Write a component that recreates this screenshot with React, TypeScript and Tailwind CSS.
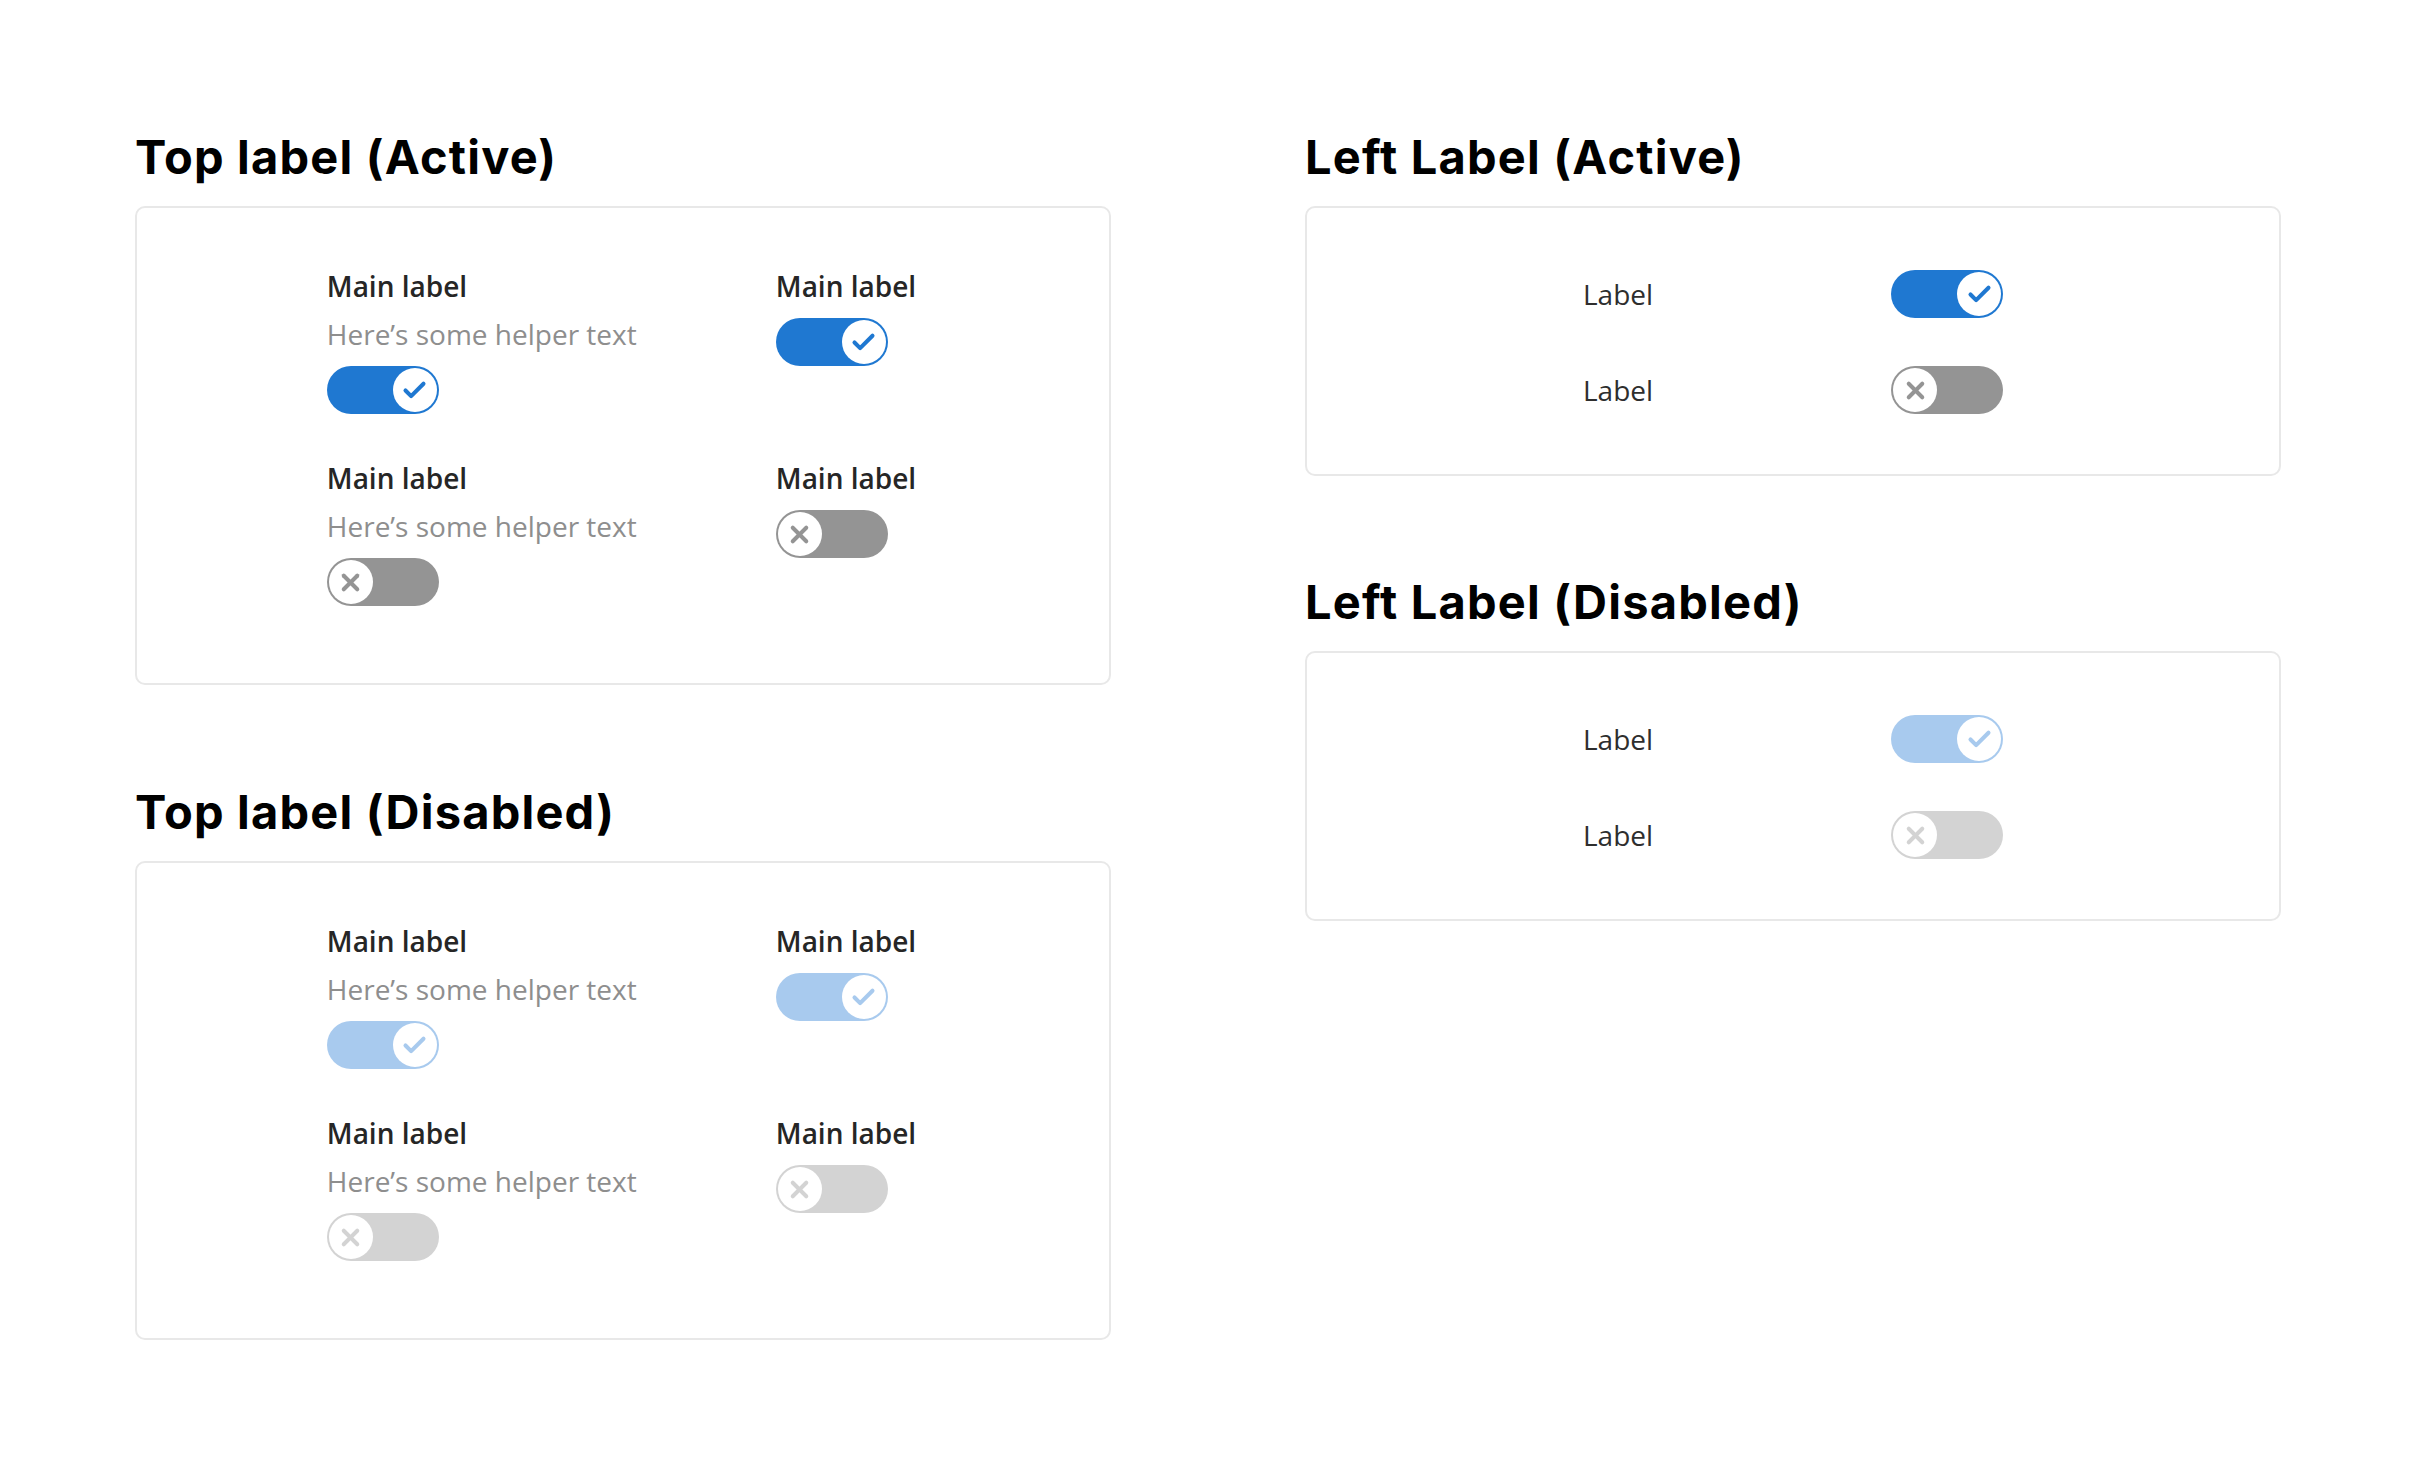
import { Check, X } from "lucide-react";

type Tone = "on" | "off";

const TRACK: Record<string, string> = {
  on: "bg-[#1f78d1]",
  off: "bg-[#949494]",
  onDisabled: "bg-[#a8caee]",
  offDisabled: "bg-[#d3d3d3]",
};

const ICON: Record<string, string> = {
  on: "text-[#1f78d1]",
  off: "text-[#949494]",
  onDisabled: "text-[#a8caee]",
  offDisabled: "text-[#d3d3d3]",
};

/** Pill switch with a white knob that carries a check or a cross. */
function Toggle({ tone, disabled }: { tone: Tone; disabled?: boolean }) {
  const key = disabled ? `${tone}Disabled` : tone;
  const on = tone === "on";
  return (
    <div
      className={`flex h-12 w-[112px] shrink-0 items-center rounded-full p-[2px] ${TRACK[key]} ${
        on ? "justify-end" : "justify-start"
      }`}
    >
      <div className={`flex h-11 w-11 items-center justify-center rounded-full bg-white ${ICON[key]}`}>
        {on ? (
          <Check size={27} strokeWidth={3.6} />
        ) : (
          <X size={27} strokeWidth={3.6} />
        )}
      </div>
    </div>
  );
}

function Heading({ children }: { children: string }) {
  return (
    <h2 className="mb-[21px] font-['Inter',sans-serif] text-[47px] font-bold leading-[56px] tracking-[1.2px] text-black">
      {children}
    </h2>
  );
}

function Card({ children, className = "" }: { children: React.ReactNode; className?: string }) {
  return (
    <div className={`rounded-[10px] border-2 border-[#e8e8e8] bg-white ${className}`}>{children}</div>
  );
}

function TopItem({ helper, tone, disabled }: { helper?: boolean; tone: Tone; disabled?: boolean }) {
  return (
    <div className="flex flex-col items-start">
      <span className="text-[28px] font-semibold leading-9 text-[#262626]">Main label</span>
      {helper && (
        <span className="mt-3 text-[28px] leading-9 text-[#8e8e8e]">Here’s some helper text</span>
      )}
      <div className="mt-3.5">
        <Toggle tone={tone} disabled={disabled} />
      </div>
    </div>
  );
}

function TopCard({ disabled }: { disabled?: boolean }) {
  return (
    <Card className="flex justify-center pt-[60px] pb-[77px]">
      <div className="grid grid-cols-[449px_auto] gap-y-[46px] pr-[3px]">
        <TopItem helper tone="on" disabled={disabled} />
        <TopItem tone="on" disabled={disabled} />
        <TopItem helper tone="off" disabled={disabled} />
        <TopItem tone="off" disabled={disabled} />
      </div>
    </Card>
  );
}

function LeftCard({ disabled }: { disabled?: boolean }) {
  return (
    <Card className="flex flex-col items-center gap-12 pt-[62px] pb-[60px]">
      {(["on", "off"] as Tone[]).map((tone) => (
        <div key={tone} className="flex items-center">
          <span className="w-[308px] text-[28px] leading-9 text-[#2e2e2e]">Label</span>
          <Toggle tone={tone} disabled={disabled} />
        </div>
      ))}
    </Card>
  );
}

export default function App() {
  return (
    <div className="min-h-screen bg-white px-[135px] pt-[129px] font-['Open_Sans',sans-serif]">
      <div className="grid grid-cols-2 gap-x-[194px]">
        <div className="flex flex-col">
          <Heading>Top label (Active)</Heading>
          <TopCard />
          <div className="mt-[99px]">
            <Heading>Top label (Disabled)</Heading>
          </div>
          <TopCard disabled />
        </div>
        <div className="flex flex-col">
          <Heading>Left Label (Active)</Heading>
          <LeftCard />
          <div className="mt-[98px]">
            <Heading>Left Label (Disabled)</Heading>
          </div>
          <LeftCard disabled />
        </div>
      </div>
    </div>
  );
}
